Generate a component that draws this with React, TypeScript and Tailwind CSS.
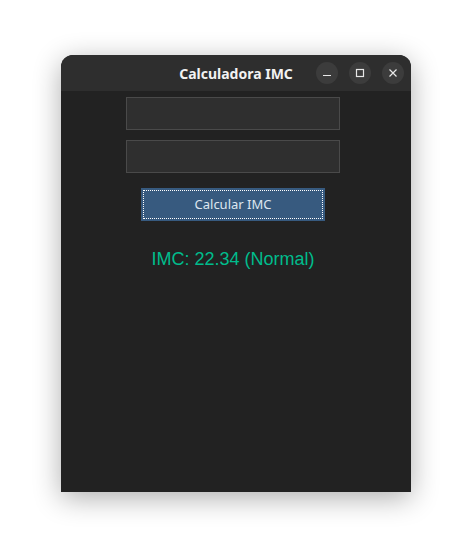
import React from 'react';

const WinButton: React.FC<{ children: React.ReactNode }> = ({ children }) => (
  <div className="w-[22px] h-[22px] rounded-full bg-[#3c3c3c] flex items-center justify-center text-[#e8e8e8]">
    {children}
  </div>
);

const App: React.FC = () => {
  return (
    <div className="w-[472px] h-[559px] bg-white pt-[55px] pl-[61px]">
      <div className="w-[350px] h-[437px] flex flex-col rounded-t-[12px] overflow-hidden bg-[#222222] shadow-[0_6px_28px_rgba(0,0,0,0.32)]">
        {/* Title bar */}
        <div className="relative h-[36px] shrink-0 bg-[#2e2e2e] flex items-center justify-center">
          <span className="text-[14px] font-bold text-[#f2f2f2] font-['Noto_Sans',sans-serif]">Calculadora IMC</span>
          <div className="absolute right-[7px] top-[7px] flex gap-[11px]">
            <WinButton>
              <svg width="10" height="10" viewBox="0 0 10 10"><path d="M1 7.5h8" stroke="currentColor" strokeWidth="1.2" /></svg>
            </WinButton>
            <WinButton>
              <svg width="10" height="10" viewBox="0 0 10 10"><rect x="1.5" y="1.5" width="7" height="7" fill="none" stroke="currentColor" strokeWidth="1.2" /></svg>
            </WinButton>
            <WinButton>
              <svg width="10" height="10" viewBox="0 0 10 10"><path d="M1.5 1.5l7 7M8.5 1.5l-7 7" stroke="currentColor" strokeWidth="1.2" /></svg>
            </WinButton>
          </div>
        </div>

        {/* Body */}
        <div className="flex flex-col items-center pt-[6px] pr-[6px]">
          <input className="w-[214px] h-[33px] bg-[#2f2f2f] border border-[#4a4a4a] outline-none" />
          <input className="mt-[10px] w-[214px] h-[33px] bg-[#2f2f2f] border border-[#4a4a4a] outline-none" />
          <button className="mt-[15px] w-[184px] h-[33px] bg-[#375a7f] p-[2px]">
            <div className="w-full h-full border border-dotted border-white flex items-center justify-center text-[13px] text-[#dde6f0] font-['Noto_Sans',sans-serif]">
              Calcular IMC
            </div>
          </button>
          <div className="mt-[28px] text-[18px] leading-[21px] text-[#00bc8c] font-['Liberation_Sans',sans-serif]">
            IMC: 22.34 (Normal)
          </div>
        </div>
      </div>
    </div>
  );
};

export default App;
